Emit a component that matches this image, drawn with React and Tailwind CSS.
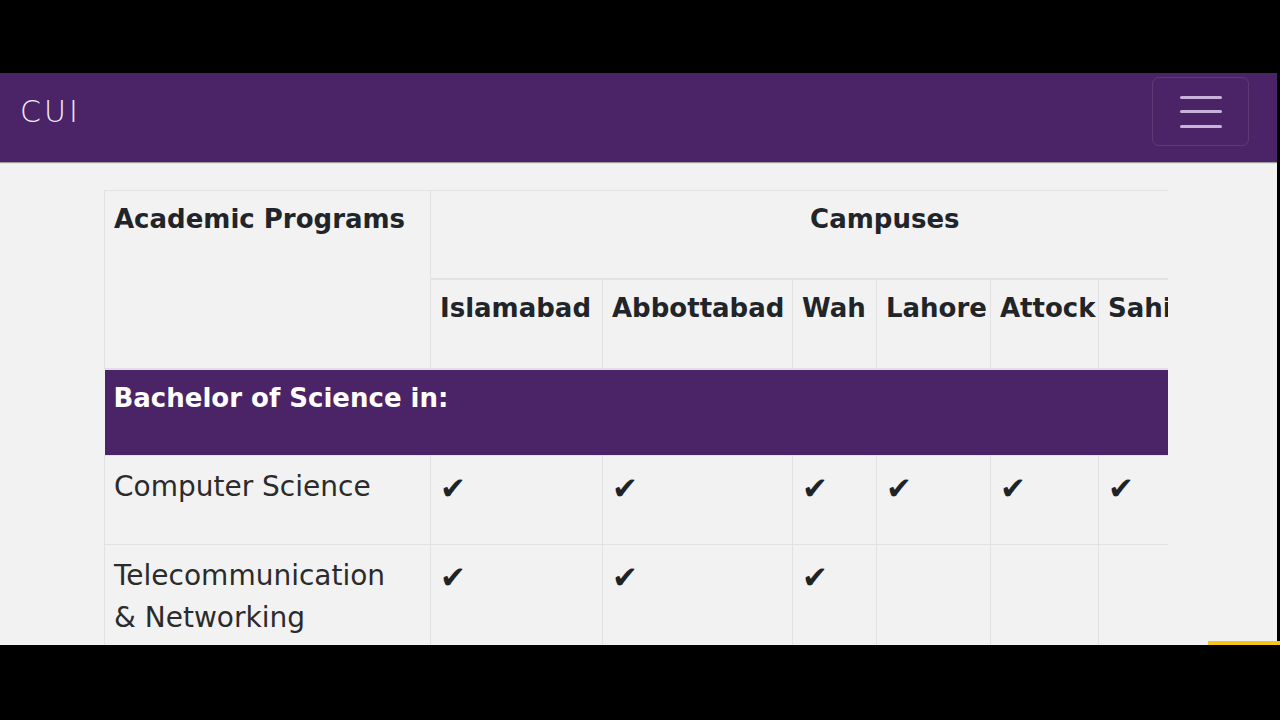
import React from 'react';

const CAMPUSES = [
  { name: 'Islamabad', col: 'w-[172px]' },
  { name: 'Abbottabad', col: 'w-[190px]' },
  { name: 'Wah', col: 'w-[84px]' },
  { name: 'Lahore', col: 'w-[114px]' },
  { name: 'Attock', col: 'w-[108px]' },
  { name: 'Sahiwal', col: 'w-[130px]' },
  { name: 'Vehari', col: 'w-[110px]' },
];

const PROGRAMS = [
  { name: ['Computer Science'], has: [1, 1, 1, 1, 1, 1, 1] },
  { name: ['Telecommunication', '& Networking'], has: [1, 1, 1, 0, 0, 0, 0] },
];

function Navbar() {
  return (
    <div className="flex h-[89px] shrink-0 justify-between bg-[#4a2467] pl-[20px] pr-[28px] shadow-[0_1px_1px_rgba(0,0,0,0.35)]">
      <span className="pt-[21px] text-[30px] font-extralight leading-[36px] tracking-[0.1em] text-[#f4ecf8]">CUI</span>
      {/* toggler */}
      <button className="mt-[4px] flex h-[69px] w-[97px] flex-col items-center justify-center gap-[11.5px] rounded-[7px] border border-white/10">
        <span className="block h-[3px] w-[42px] rounded-full bg-[#c8b2d9]" />
        <span className="block h-[3px] w-[42px] rounded-full bg-[#c8b2d9]" />
        <span className="block h-[3px] w-[42px] rounded-full bg-[#c8b2d9]" />
      </button>
    </div>
  );
}

function ProgramsTable() {
  return (
    <div className="w-[1064px] overflow-hidden">
      <table className="w-[1234px] table-fixed border-collapse text-[#212529]">
        <colgroup>
          <col className="w-[326px]" />
          {CAMPUSES.map((c) => (
            <col key={c.name} className={c.col} />
          ))}
        </colgroup>
        <thead>
          <tr className="h-[88px]">
            <th
              rowSpan={2}
              className="border border-b-2 border-[#e0e2e4] border-b-[#e4dde9] px-[9px] py-[9px] text-left align-top text-[26px] font-bold leading-[39px]"
            >
              Academic Programs
            </th>
            <th
              colSpan={CAMPUSES.length}
              className="border-t border-b-2 border-[#e0e2e4] px-[10px] py-[9px] text-center align-top text-[26px] font-bold leading-[39px]"
            >
              Campuses
            </th>
          </tr>
          <tr className="h-[90px]">
            {CAMPUSES.map((c) => (
              <th
                key={c.name}
                className="whitespace-nowrap border-r border-b-2 border-[#e0e2e4] border-b-[#e4dde9] px-[9px] py-[9px] text-left align-top text-[26px] font-bold leading-[39px]"
              >
                {c.name}
              </th>
            ))}
          </tr>
        </thead>
        <tbody>
          <tr className="h-[87px] bg-[#4a2467]">
            <td
              colSpan={CAMPUSES.length + 1}
              className="px-[9px] py-[9px] align-top text-[26px] font-bold leading-[39px] text-white"
            >
              Bachelor of Science in:
            </td>
          </tr>
          {PROGRAMS.map((p) => (
            <tr key={p.name[0]} className="h-[89px]">
              <td className="border border-[#e0e2e4] px-[9px] py-[10px] align-top text-[28px] leading-[42px] text-[#2b2b2b]">
                {p.name.map((line) => (
                  <div key={line}>{line}</div>
                ))}
              </td>
              {p.has.map((h, i) => (
                <td
                  key={i}
                  className="border border-[#e0e2e4] px-[9px] pt-[11px] pb-[10px] align-top text-[31px] leading-[42px] text-[#1f2326]"
                >
                  {h ? '✔' : ''}
                </td>
              ))}
            </tr>
          ))}
        </tbody>
      </table>
    </div>
  );
}

export default function App() {
  return (
    <div className="flex h-[720px] w-[1280px] flex-col bg-black font-['DejaVu_Sans',sans-serif]">
      <div className="h-[73px] shrink-0" />
      <div className="relative flex h-[572px] w-[1277px] flex-col overflow-hidden bg-[#f2f2f2]">
        <Navbar />
        <div className="pl-[104px] pt-[28px]">
          <ProgramsTable />
        </div>
      </div>
      <div className="relative flex-1">
        <div className="absolute -top-[4px] right-0 h-[4px] w-[72px] bg-[#f5c518]" />
      </div>
    </div>
  );
}
